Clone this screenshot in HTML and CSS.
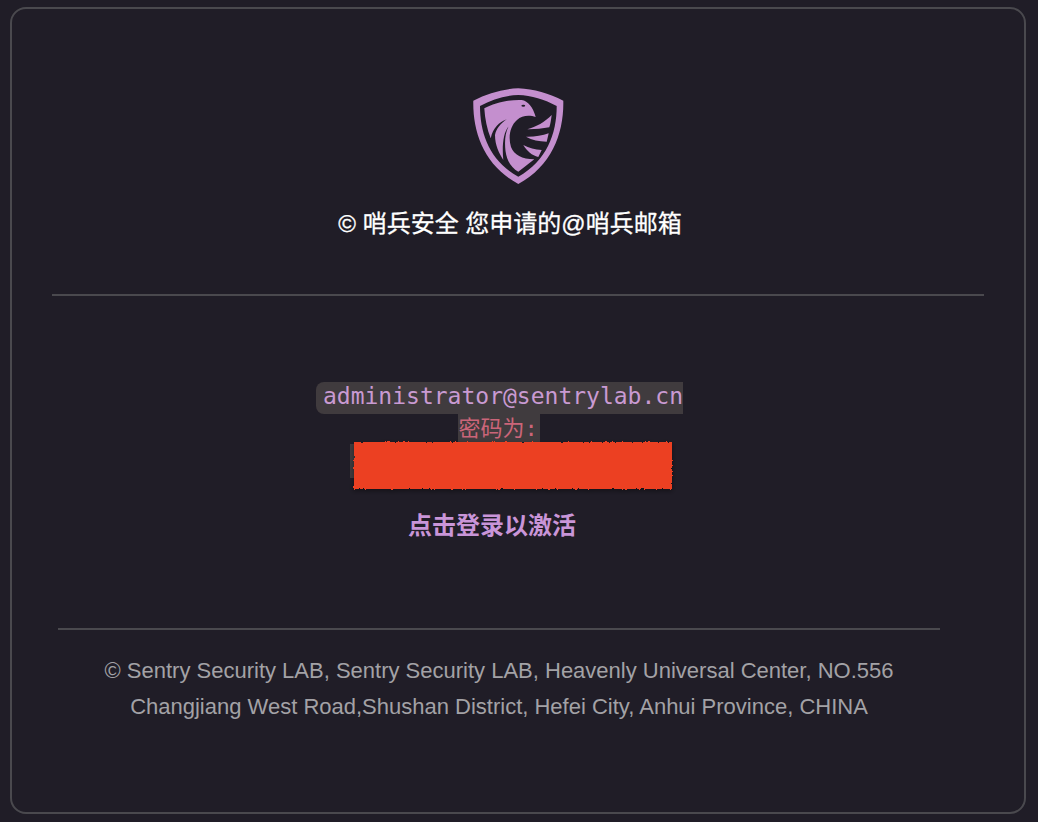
FILE: index.html
```html
<!DOCTYPE html>
<html lang="zh-CN">
<head>
  <meta charset="UTF-8" />
  <title>哨兵安全</title>
  <link rel="stylesheet" href="styles.css">
</head>
<body>

<div class="mail-card">
  <div class="mail-head">
    <svg class="logo" viewBox="0 0 92 98" aria-hidden="true">
      <path class="logo-fill" fill-rule="evenodd" d="M46.3 1.3C62 2 77 6.5 91.3 13.7C92 46 80 79 46.3 97C12.5 79 .6 46 1.3 13.7C15.5 6.5 30.5 2 46.3 1.3ZM46.3 8C33 8.5 20 12.5 8 19C8 47 18 74 46.3 89.7C74.5 74 84.7 47 84.7 19C72.5 12.5 59.5 8.5 46.3 8Z"/>
      <path class="logo-fill" d="M12.3 21.3C22 16 36 12.5 49.7 13C56 14 61 20 63.7 30C58 28 50 28 45 33C38 39 36 50 39 60C42 68 50 72 62.3 72.3L46.3 84.7C40 81 35 75 33.5 64C32.5 55 33 46 36.5 39.5C31 46 30 60 31.3 73C27 66 23 58 23 48C24 42 29 36 34.7 32.3C27 35 21 41 18.7 51.3C15 42 13 32 12.3 21.3Z"/>
      <path class="logo-fill" d="M55.3 42.3C64 40 73 35 79.7 28C79 33 78.5 37 77.3 40.3C70 41.5 62 42.5 55.3 42.3Z"/>
      <path class="logo-fill" d="M54 49.7C62 50 70 48.5 76.7 46.3L74.7 54.7C67 54.5 60 53 54 49.7Z"/>
      <path class="logo-fill" d="M51.3 58C57 61 63 62.5 69.7 63L66.3 70C60 68.5 55 64 51.3 58Z"/>
      <ellipse class="logo-eye" cx="51.3" cy="18.7" rx="1.9" ry="1"/>
    </svg>
    <div class="mail-title">© 哨兵安全 您申请的@哨兵邮箱</div>
  </div>

  <div class="line-top"></div>

  <div class="mail-body">
    <div class="row-email"><code class="code-mail">administrator@sentrylab.cn</code></div>
    <div class="row-label"><code class="code-label">密码为:</code></div>
    <div class="row-pass">
      <code class="code-pass"></code>
      <svg class="redact" viewBox="0 0 330 59" aria-hidden="true">
        <defs>
          <filter id="rough" x="-5%" y="-20%" width="110%" height="140%">
            <feTurbulence type="fractalNoise" baseFrequency="0.3" numOctaves="2" seed="4"/>
            <feDisplacementMap in="SourceGraphic" scale="3" xChannelSelector="R" yChannelSelector="G"/>
            <feDropShadow dx="0" dy="2" stdDeviation="2.5" flood-color="#000" flood-opacity="0.4"/>
          </filter>
        </defs>
        <rect x="6" y="6" width="318" height="47" fill="#ec3f23" filter="url(#rough)"/>
      </svg>
    </div>
    <a class="login-link" href="#">点击登录以激活</a>
  </div>

  <div class="line-bottom"></div>

  <div class="mail-foot">
    <p>© Sentry Security LAB, Sentry Security LAB, Heavenly Universal Center, NO.556</p>
    <p>Changjiang West Road,Shushan District, Hefei City, Anhui Province, CHINA</p>
  </div>
</div>

</body>
</html>
```

FILE: styles.css
```css
* { box-sizing: border-box; margin: 0; padding: 0; }
html, body { height: 100%; }
body {
  background: #201d27;
  font-family: "Liberation Sans", "Noto Sans CJK SC", sans-serif;
  padding: 7px 12px 8px 10px;
  overflow: hidden;
}

.mail-card {
  height: 807px;
  border: 2px solid #4a494e;
  border-radius: 16px;
  padding-top: 78px;
}

.mail-head {
  display: flex;
  flex-direction: column;
  align-items: center;
}
.logo {
  display: block;
  width: 92px;
  height: 98px;
}
.logo-fill { fill: #c48fce; }
.logo-eye { fill: #201d27; }
.mail-title {
  margin-top: 24px;
  margin-right: 16px;
  color: #fff;
  font-size: 24px;
  line-height: 30px;
  font-weight: 400;
  -webkit-text-stroke: 0.3px #fff;
}

.line-top {
  height: 2px;
  margin: 55px 40px 0 40px;
  background: #4a494e;
}

.mail-body {
  margin-top: 86px;
  display: flex;
  flex-direction: column;
  align-items: center;
}
.row-email { margin-right: 37px; height: 32px; }
.code-mail {
  display: block;
  height: 32px;
  padding: 0 0 0 7px;
  background: #403b3e;
  border-radius: 8px 0 0 8px;
  color: #c99ad2;
  font-family: "DejaVu Sans Mono", monospace;
  font-size: 23px;
  line-height: 29px;
}
.row-label { margin-right: 38px; height: 28px; }
.code-label {
  display: block;
  height: 28px;
  padding: 0 2px 0 0;
  background: #403b3e;
  color: #cb6579;
  font-family: "DejaVu Sans Mono", "Noto Sans CJK SC", monospace;
  font-size: 22px;
  line-height: 29px;
}
.row-pass {
  position: relative;
  width: 322px;
  height: 48px;
  margin-right: 14px;
}
.code-pass {
  display: block;
  width: 60px;
  height: 34px;
  margin-top: 2px;
  background: #403b3e;
}
.redact {
  position: absolute;
  top: -6px;
  left: -2px;
  width: 330px;
  height: 59px;
}
.login-link {
  margin-top: 20px;
  margin-right: 52px;
  color: #c995d8;
  font-size: 24px;
  line-height: 32px;
  font-weight: bold;
  text-decoration: none;
}

.line-bottom {
  height: 2px;
  margin: 86px 84px 0 46px;
  background: #4a494e;
}

.mail-foot {
  margin: 23px 84px 0 46px;
  text-align: center;
  color: #a3a2a6;
  font-size: 22px;
  line-height: 36px;
}
```
